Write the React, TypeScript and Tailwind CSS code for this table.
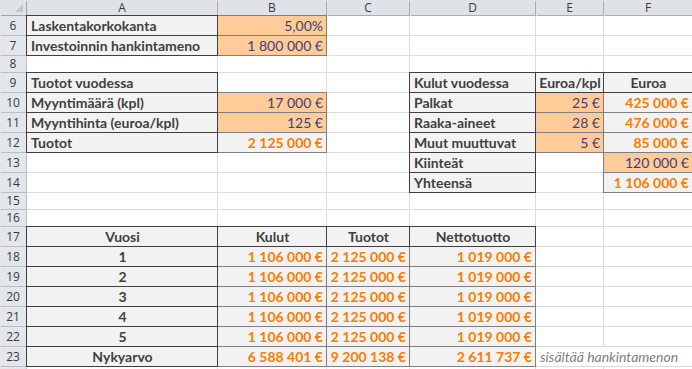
import React from "react";

type Kind = "" | "out" | "outC" | "in" | "calc" | "note";
type Cell = [Kind, string];

const COLS = ["A", "B", "C", "D", "E", "F"];

// one entry per sheet row, cells for A..F (missing = empty)
const rows: { n: number; cells: Partial<Record<string, Cell>> }[] = [
  { n: 6, cells: { A: ["out", "Laskentakorkokanta"], B: ["in", "5,00%"] } },
  { n: 7, cells: { A: ["out", "Investoinnin hankintameno"], B: ["in", "1 800 000 €"] } },
  { n: 8, cells: {} },
  {
    n: 9,
    cells: {
      A: ["out", "Tuotot vuodessa"],
      D: ["out", "Kulut vuodessa"],
      E: ["outC", "Euroa/kpl"],
      F: ["outC", "Euroa"],
    },
  },
  {
    n: 10,
    cells: {
      A: ["out", "Myyntimäärä (kpl)"],
      B: ["in", "17 000 €"],
      D: ["out", "Palkat"],
      E: ["in", "25 €"],
      F: ["calc", "425 000 €"],
    },
  },
  {
    n: 11,
    cells: {
      A: ["out", "Myyntihinta (euroa/kpl)"],
      B: ["in", "125 €"],
      D: ["out", "Raaka-aineet"],
      E: ["in", "28 €"],
      F: ["calc", "476 000 €"],
    },
  },
  {
    n: 12,
    cells: {
      A: ["out", "Tuotot"],
      B: ["calc", "2 125 000 €"],
      D: ["out", "Muut muuttuvat"],
      E: ["in", "5 €"],
      F: ["calc", "85 000 €"],
    },
  },
  { n: 13, cells: { D: ["out", "Kiinteät"], F: ["in", "120 000 €"] } },
  { n: 14, cells: { D: ["out", "Yhteensä"], F: ["calc", "1 106 000 €"] } },
  { n: 15, cells: {} },
  { n: 16, cells: {} },
  {
    n: 17,
    cells: {
      A: ["outC", "Vuosi"],
      B: ["outC", "Kulut"],
      C: ["outC", "Tuotot"],
      D: ["outC", "Nettotuotto"],
    },
  },
  ...[1, 2, 3, 4, 5].map((y) => ({
    n: 17 + y,
    cells: {
      A: ["outC", String(y)] as Cell,
      B: ["calc", "1 106 000 €"] as Cell,
      C: ["calc", "2 125 000 €"] as Cell,
      D: ["calc", "1 019 000 €"] as Cell,
    },
  })),
  {
    n: 23,
    cells: {
      A: ["outC", "Nykyarvo"],
      B: ["calc", "6 588 401 €"],
      C: ["calc", "9 200 138 €"],
      D: ["calc", "2 611 737 €"],
      E: ["note", "sisältää hankintamenon"],
    },
  },
  // row 24 only peeks in at the bottom edge
  { n: 24, cells: {} },
];

const kindClass: Record<Kind, string> = {
  "": "bg-white",
  out: "bg-[#f2f2f2] font-bold text-[#3f3f3f] shadow-[0_0_0_1px_#3f3f3f] z-20",
  outC: "bg-[#f2f2f2] font-bold text-[#3f3f3f] justify-center shadow-[0_0_0_1px_#3f3f3f] z-20",
  in: "bg-[#ffcc99] text-[#3f3f76] justify-end shadow-[0_0_0_1px_#7f7f7f] z-10",
  calc: "bg-[#f2f2f2] font-bold text-[#fa7d00] justify-end shadow-[0_0_0_1px_#7f7f7f] z-10",
  note: "bg-white italic text-[#7f7f7f] col-span-2 z-30",
};

function SheetCell({ cell }: { cell?: Cell }) {
  const [kind, text] = cell ?? ["", ""];
  return (
    <div
      className={`relative flex items-center whitespace-nowrap pl-[4px] pr-[3px] text-[14px] leading-none ${kindClass[kind]}`}
    >
      {text}
    </div>
  );
}

export default function App() {
  return (
    <div className="w-[692px] h-[369px] overflow-hidden bg-white font-['Lato','Liberation_Sans',sans-serif]">
      <div className="grid grid-cols-[26px_190px_108px_82px_125px_67px_88px] grid-rows-[15px_19px_19px_16px_repeat(6,19px)_16px_16px_repeat(8,19px)] gap-px bg-[#dadcdd]">
        {/* corner */}
        <div className="relative bg-[#dfe3e8] shadow-[1px_1px_0_#9ea4ab]">
          <svg className="absolute inset-0" width="26" height="15" viewBox="0 0 26 15">
            <polygon points="23,4 23,12 15,12" fill="#c3c7cc" />
          </svg>
        </div>
        {COLS.map((c) => (
          <div
            key={c}
            className="flex items-center justify-center bg-[#dfe3e8] text-[12px] leading-[14px] text-[#3a3a3a] font-['Open_Sans',sans-serif] shadow-[1px_1px_0_#a7adb4]"
          >
            {c}
          </div>
        ))}

        {rows.map((r) => (
          <React.Fragment key={r.n}>
            <div className="flex items-center justify-center bg-[#e3e6ea] text-[12px] leading-none text-[#3a3a3a] font-['Open_Sans',sans-serif] shadow-[1px_1px_0_#b9bec4]">
              {r.n < 24 ? r.n : ""}
            </div>
            {COLS.map((c) => {
              if (c === "F" && r.cells.E?.[0] === "note") return null;
              return <SheetCell key={c} cell={r.cells[c]} />;
            })}
          </React.Fragment>
        ))}
      </div>
    </div>
  );
}
